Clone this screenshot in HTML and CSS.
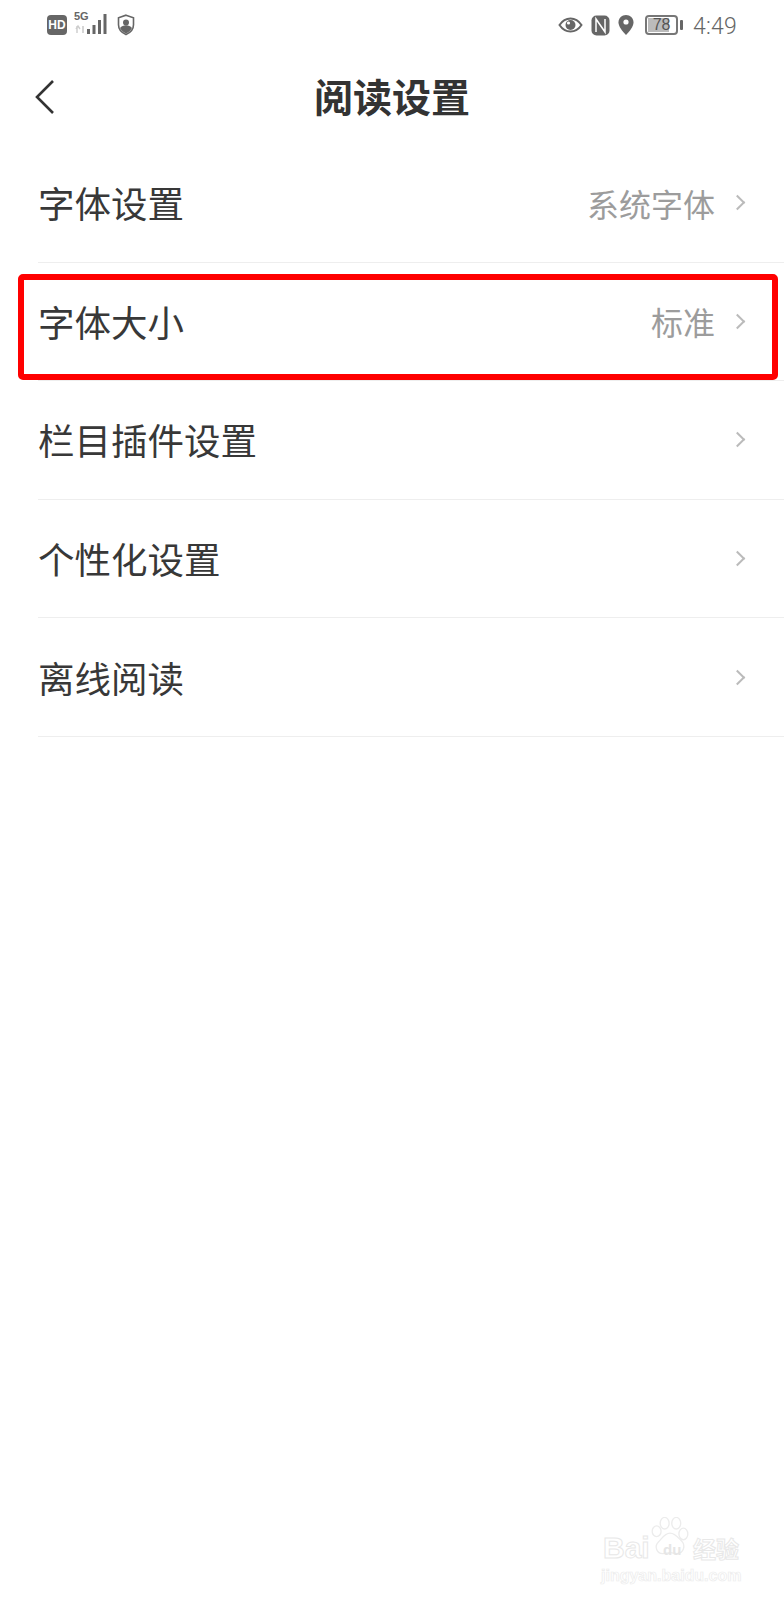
FILE: index.html
```html
<!DOCTYPE html>
<html lang="zh-CN">
<head>
	<meta charset="UTF-8">
	<title>阅读设置</title>
	<link rel="stylesheet" href="styles.css">
</head>
<body>
<div class="status_bar">
	<div class="status_left">
		<span class="hd">HD</span>
		<div class="signal">
			<span class="net">5G</span>
			<svg width="34" height="22" viewBox="0 0 34 22">
				<path d="M3 13v7M6 16l-2-3-2 3" stroke="#ccc" stroke-width="1.4" fill="none"/>
				<path d="M9 13v7" stroke="#ccc" stroke-width="1.6"/>
				<rect x="13" y="16" width="3" height="5" fill="#666"/>
				<rect x="18.5" y="12" width="3" height="9" fill="#666"/>
				<rect x="24" y="7" width="3" height="14" fill="#666"/>
				<rect x="29.5" y="1" width="3" height="20" fill="#666"/>
			</svg>
		</div>
		<svg class="shield" width="18" height="22" viewBox="0 0 18 22">
			<path d="M9 1.2l7.5 2.6v7c0 4.6-3.200 7.900-7.500 9.800-4.300-1.900-7.500-5.200-7.500-9.800v-7z" fill="none" stroke="#666" stroke-width="1.6"/>
			<circle cx="9" cy="8.500" r="3" fill="#666"/>
			<path d="M3 14c1.500-2 3.500-2.800 6-2.800s4.500 .8 6 2.800c-1.300 2.400-3.300 4.200-6 5.500-2.700-1.300-4.700-3.100-6-5.500z" fill="#666"/>
		</svg>
	</div>
	<div class="status_right">
		<svg width="25" height="16" viewBox="0 0 25 16">
			<path d="M1.500 8C4.500 3.500 8 1.500 12.500 1.500S20.500 3.500 23.500 8c-3 4.500-6.500 6.500-11 6.500S4.500 12.500 1.500 8z" fill="none" stroke="#666" stroke-width="2"/>
			<circle cx="12.500" cy="8" r="5" fill="#666"/>
			<circle cx="10.500" cy="6" r="1.600" fill="#fff"/>
		</svg>
		<svg class="nfc" width="19" height="21" viewBox="0 0 19 21">
			<rect x="0.500" y="0.500" width="18" height="20" rx="5" fill="#666"/>
			<path d="M5 17V4l9 13V4" fill="none" stroke="#fff" stroke-width="1.500"/>
		</svg>
		<svg width="16" height="22" viewBox="0 0 16 21">
			<path d="M8 .5c4.200 0 7.500 3.200 7.500 7.300 0 4.400-3.800 8.800-7.500 12.700C4.300 16.600.5 12.200.5 7.800.5 3.700 3.800.5 8 .5z" fill="#666"/>
			<circle cx="8" cy="7.500" r="2.600" fill="#fff"/>
		</svg>
		<div class="battery">
			<span class="battery_box"><span class="battery_fill" style="width:78%"></span><span class="battery_num">78</span></span>
			<span class="battery_tip"></span>
		</div>
		<span class="clock">4:49</span>
	</div>
</div>

<div class="title_bar">
	<svg class="back" width="22" height="36" viewBox="0 0 22 36">
		<path d="M19 2L3 18l16 16" fill="none" stroke="#333" stroke-width="2.600"/>
	</svg>
	<h1>阅读设置</h1>
</div>

<div class="list">
	<div class="row"><span class="row_name">字体设置</span><span class="row_value">系统字体</span><span class="arrow"></span></div>
	<div class="row row_marked"><span class="row_name">字体大小</span><span class="row_value">标准</span><span class="arrow"></span></div>
	<div class="row"><span class="row_name">栏目插件设置</span><span class="arrow"></span></div>
	<div class="row"><span class="row_name">个性化设置</span><span class="arrow"></span></div>
	<div class="row"><span class="row_name">离线阅读</span><span class="arrow"></span></div>
</div>

<div class="watermark">
	<svg class="paw" width="40" height="41" viewBox="0 0 44 46">
		<g fill="#fff" stroke="#ececec" stroke-width="1.500">
			<ellipse cx="7" cy="16" rx="5" ry="6"/>
			<ellipse cx="16" cy="7" rx="5" ry="6.500"/>
			<ellipse cx="29" cy="7" rx="5" ry="6.500"/>
			<ellipse cx="37" cy="19" rx="5" ry="6.500"/>
			<path d="M22 18c6 0 9 5 13 9 5 5 2 14-5 14-3 0-5-1-8-1s-5 1-8 1c-7 0-10-8-5-13 4-4 7-10 13-10z"/>
		</g>
	</svg>
	<span class="wm_du">du</span>
	<span class="wm_bai">Bai</span>
	<span class="wm_jy">经验</span>
	<div class="wm_url">jingyan.baidu.com</div>
</div>
</body>
</html>
```
FILE: styles.css
```css
*, *::after {box-sizing:border-box;}

html, body {margin:0;padding:0;}

body {
	width:784px;height:1600px;position:relative;overflow:hidden;
	background-color:#fff;color:#333;
	font-family:"Noto Sans CJK SC","Noto Sans",sans-serif;
}

/* status bar */
.status_bar {
	height:50px;padding:0 47px 0 47px;
	display:flex;justify-content:space-between;align-items:center;
}
.status_left, .status_right {display:flex;align-items:center;}
.status_left {gap:7px;}
.status_right {gap:8px;}

.hd {
	width:20px;height:20px;border-radius:4px;background-color:#666;color:#fff;
	font:bold 12px/20px "Liberation Sans",sans-serif;text-align:center;
}
.signal {position:relative;width:34px;height:22px;margin-bottom:2px;}
.signal svg {display:block;}
.net {position:absolute;left:0;top:-2px;font:bold 11px/11px "Liberation Sans",sans-serif;color:#666;}
.shield {margin-left:2px;}

.battery {display:flex;align-items:center;gap:2px;margin-left:3px;}
.battery_box {
	display:block;position:relative;width:33px;height:20px;
	border:2px solid #777;border-radius:4px;padding:1px;
}
.battery_fill {display:block;height:100%;background-color:#bbb;}
.battery_num {
	position:absolute;left:0;right:0;top:-1px;text-align:center;
	font:16px/18px "Liberation Sans",sans-serif;color:#555;
}
.battery_tip {display:block;width:3px;height:10px;background-color:#666;border-radius:1px;}
.clock {font:300 23px/24px Roboto,sans-serif;color:#666;margin:3px 0 0 2px;letter-spacing:.2px;}

/* title */
.title_bar {height:96px;position:relative;display:flex;align-items:flex-start;justify-content:center;}
.title_bar h1 {margin:0;font-size:39px;line-height:90px;font-weight:bold;color:#333;}
.back {position:absolute;left:34px;top:29px;}

/* rows */
.list {margin-top:-2px;padding-left:38px;}
.row {
	height:118.600px;padding-right:42px;position:relative;
	display:flex;align-items:center;
	border-bottom:1px solid #eee;
}
.row_name {flex:1;font-size:36.500px;color:#383838;}
.row_value {font-size:32px;color:#9c9c9c;margin-right:17px;}
.arrow {
	width:11px;height:11px;margin-right:-1px;
	border-top:2.500px solid #bbb;border-right:2.500px solid #bbb;
	transform:rotate(45deg);
}

/* marked by hand on the screenshot */
.row_marked::after {
	content:"";position:absolute;left:-20px;right:6px;top:11.500px;height:106px;
	border:6px solid #f00;border-radius:5px;
}

/* baidu watermark */
.watermark {position:absolute;left:600px;top:1515px;width:150px;height:75px;}
.paw {position:absolute;left:50px;top:2px;}
.wm_du {
	position:absolute;left:63px;top:26px;
	font:bold 15px/18px "Liberation Sans",sans-serif;color:#e6e6e6;
}
.wm_bai {
	position:absolute;left:3px;top:16px;
	font:bold 30px/34px "Liberation Sans",sans-serif;
	color:#fff;-webkit-text-stroke:1px #e8e8e8;
}
.wm_jy {
	position:absolute;left:93px;top:17px;
	font-size:23px;line-height:32px;font-weight:bold;color:#fff;-webkit-text-stroke:1px #e8e8e8;
}
.wm_url {
	position:absolute;left:1px;top:51px;white-space:nowrap;
	font:bold 16px/20px "Liberation Sans",sans-serif;
	color:#fff;-webkit-text-stroke:.7px #ececec;
}
```
